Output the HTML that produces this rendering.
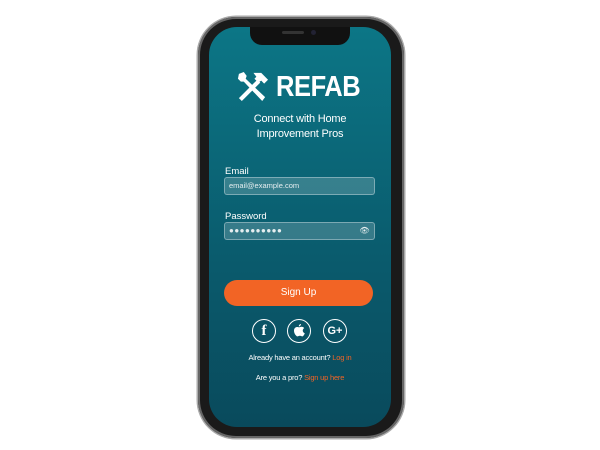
<!DOCTYPE html>
<html><head><style>
body{margin:0;width:600px;height:450px;background:#fff;position:relative;overflow:hidden;font-family:"Liberation Sans",sans-serif}
.ph{position:absolute;left:198px;top:17px;width:206px;height:421px;border-radius:38px;background:#1a1a1a;box-shadow:0 0 0 1.5px #aaa,inset 0 0 0 2px #666}
.sc{position:absolute;left:209px;top:27px;width:182px;height:400px;border-radius:28px;background:linear-gradient(#0c7686,#0a5a6c 60%,#094a5c);overflow:hidden;color:#fff}
.notch{position:absolute;left:41px;top:0;width:100px;height:18px;background:#111;border-radius:0 0 12px 12px}
.t{position:absolute;width:100%;text-align:center}
.in{position:absolute;left:15px;width:149px;height:16px;border:1px solid rgba(255,255,255,.35);background:rgba(255,255,255,.18);border-radius:3px;font-size:7.5px;line-height:16px;text-indent:4px;color:#e6eef0}
.lb{position:absolute;left:16px;font-size:9.5px}
.c{position:absolute;top:292px;width:22px;height:22px;border:1.3px solid #fff;border-radius:50%;text-align:center;line-height:22px;font-weight:bold;font-size:13px}
.o{color:#f26425}
</style></head><body>
<div class="ph"></div>
<div class="sc">
<div class="notch"><div style="position:absolute;left:32px;top:4px;width:22px;height:3px;border-radius:2px;background:#333"></div><div style="position:absolute;left:61px;top:3px;width:5px;height:5px;border-radius:50%;background:#223"></div></div>
<svg style="position:absolute;left:27px;top:43px" width="33" height="33" viewBox="0 0 34 34"><g fill="#fff"><path d="M3 29 L22 10 L25 13 L6 32 Z"/><path d="M18 3 L26 3 L33 10 L29 14 L26 11 L23 13 L19 9 L21 7 Z"/><path d="M3 4 L8 2 L11 6 L10 9 L30 28 L27 32 L8 12 L5 12 L2 9 Z"/></g></svg>
<div style="position:absolute;left:67px;top:44px;font-size:29px;font-weight:bold;letter-spacing:-0.5px;transform:scaleX(0.88);transform-origin:left">REFAB</div>
<div class="t" style="top:85px;font-size:11px;line-height:15px;letter-spacing:-0.2px">Connect with Home<br>Improvement Pros</div>
<div class="lb" style="top:139px">Email</div>
<div class="in" style="top:150px">email@example.com</div>
<div class="lb" style="top:184px">Password</div>
<div class="in" style="top:195px;font-size:8px;letter-spacing:0.5px">●●●●●●●●●●<span style="position:absolute;right:4px;font-size:8px">👁</span></div>
<div style="position:absolute;left:15px;top:253px;width:149px;height:26px;border-radius:13px;background:#f26425;text-align:center;line-height:26px;font-size:10px">Sign Up</div>
<div class="c" style="left:43px;font-family:'Liberation Serif';font-size:15px">f</div>
<div class="c" style="left:78px"><svg width="12" height="14" viewBox="0 0 12 14" style="margin-top:4px"><path fill="#fff" d="M8 0c0 1.2-1 2.4-2.2 2.4C5.7 1.2 6.8 0 8 0zM6 3.3c.8 0 1.6-.6 2.6-.6 1 0 2 .5 2.6 1.4-2.2 1.3-1.8 4.3.6 5.1-.5 1.4-1.5 3.2-2.6 3.2-.9 0-1.2-.6-2.3-.6s-1.5.6-2.3.6C3.4 12.4 1 9.7 1 6.7 1 4.4 2.5 3 4 3c.9 0 1.5.3 2 .3z"/></svg></div>
<div class="c" style="left:114px;font-size:11px">G+</div>
<div class="t" style="top:326px;font-size:7.5px;letter-spacing:-0.2px">Already have an account? <span class="o">Log in</span></div>
<div class="t" style="top:346px;font-size:7.5px;letter-spacing:-0.2px">Are you a pro? <span class="o">Sign up here</span></div>
</div>
</body></html>
